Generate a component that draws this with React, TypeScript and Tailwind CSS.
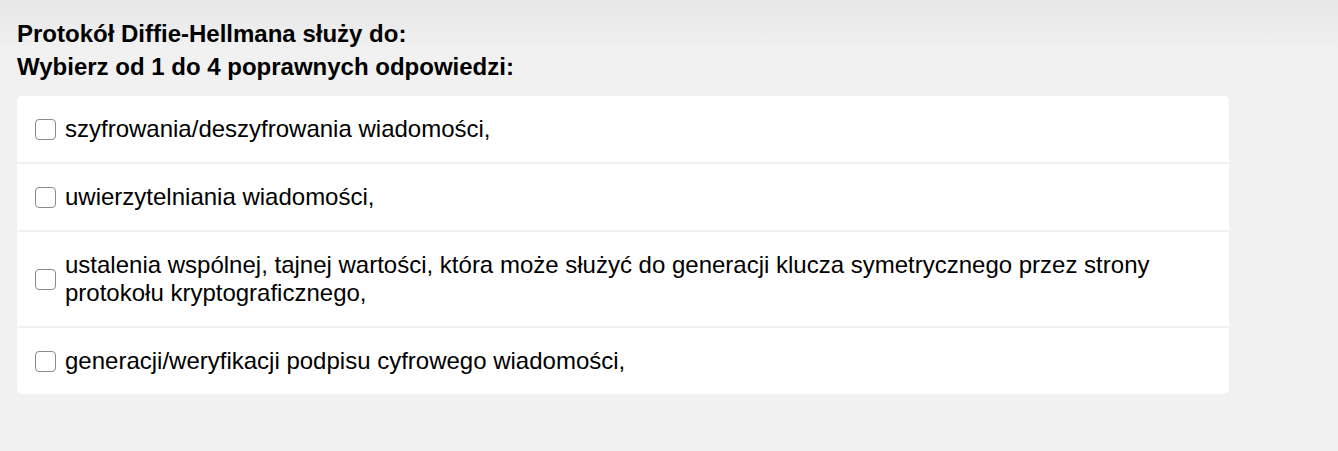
const options = [
  { id: 1, text: "szyfrowania/deszyfrowania wiadomości," },
  { id: 2, text: "uwierzytelniania wiadomości," },
  {
    id: 3,
    text: "ustalenia wspólnej, tajnej wartości, która może służyć do generacji klucza symetrycznego przez strony protokołu kryptograficznego,",
  },
  { id: 4, text: "generacji/weryfikacji podpisu cyfrowego wiadomości," },
];

const App = () => {
  return (
    <div
      className="min-h-[451px] w-full bg-[#f1f1f1] text-black"
      style={{ fontFamily: '"Liberation Sans", Arial, sans-serif' }}
    >
      <div className="bg-gradient-to-b from-[#e6e6e6] to-[#f1f1f1] to-[50px] px-[17px] pt-[20px] pb-[41px]">
        {/* Question header */}
        <div className="text-[24px] font-bold leading-[28px]">
          Protokół Diffie-Hellmana służy do:
        </div>
        <div className="mt-[5px] text-[24px] font-bold leading-[28px]">
          Wybierz od 1 do 4 poprawnych odpowiedzi:
        </div>

        {/* Answers */}
        <div className="mt-[15px] flex w-[1212px] flex-col gap-[2px]">
          {options.map((opt, i) => (
            <label
              key={opt.id}
              className={`flex items-center gap-[9px] bg-white py-[19px] pl-[18px] pr-[18px] ${
                i === 0 ? "rounded-t-[5px]" : ""
              } ${i === options.length - 1 ? "rounded-b-[5px]" : ""}`}
            >
              <span className="h-[21px] w-[21px] shrink-0 rounded-[4px] border border-[#8a8a8a] bg-white" />
              <span className="text-[24px] leading-[28px]">{opt.text}</span>
            </label>
          ))}
        </div>
      </div>
    </div>
  );
};

export default App;
